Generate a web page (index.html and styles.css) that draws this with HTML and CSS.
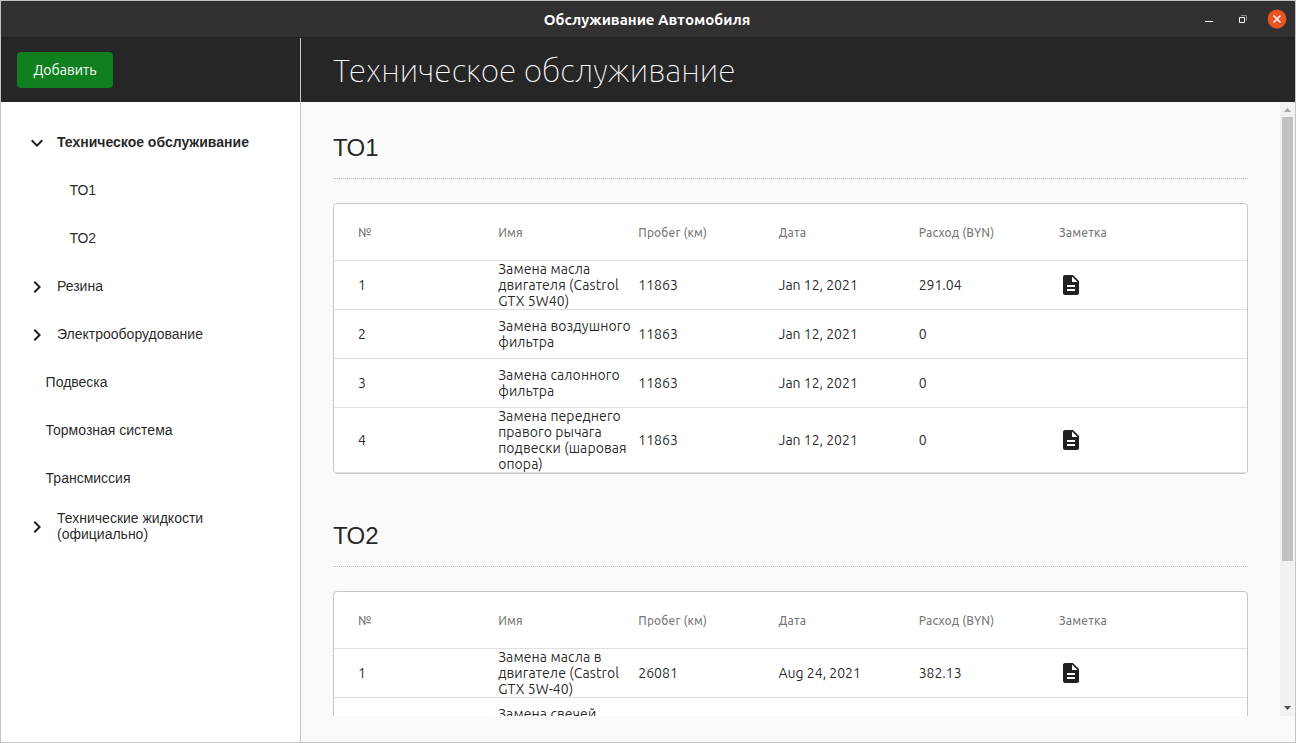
FILE: index.html
```html
<!DOCTYPE html>
<html lang="ru">
<head>
<meta charset="utf-8">
<title>Обслуживание Автомобиля</title>
<link rel="stylesheet" href="styles.css">
</head>
<body>
<svg class="defs" width="0" height="0" aria-hidden="true">
  <symbol id="chevron" viewBox="0 0 24 24"><path d="M8.59 16.59 13.17 12 8.59 7.41 10 6l6 6-6 6z"/></symbol>
  <symbol id="note" viewBox="0 0 24 24"><path d="M14 2H6c-1.1 0-2 .9-2 2v16c0 1.1.9 2 2 2h12c1.1 0 2-.9 2-2V8zm2 16H8v-2h8zm0-4H8v-2h8zm-3-5V3.5L18.500 9z"/></symbol>
</svg>
<div class="window">
  <header class="titlebar">
    <span class="window-title">Обслуживание Автомобиля</span>
    <div class="controls">
      <svg class="ctl" width="10" height="10"><path d="M1 7.500h8" stroke="#fff"/></svg>
      <svg class="ctl" width="10" height="10" fill="none"><path d="M3 1.500h5.500V7" stroke="#8c8b8b"/><path d="M1.500 3.500h5v5h-5z" stroke="#fff"/></svg>
      <svg class="close" width="20" height="20"><circle cx="10" cy="10" r="9.400" fill="#e95420"/><path d="m6.500 6.500 7 7m0-7-7 7" stroke="#fff" stroke-width="1.500"/></svg>
    </div>
  </header>
  <div class="body">
    <aside class="sidebar">
      <div class="toolbar"><button class="add">Добавить</button></div>
      <nav class="tree">
        <div class="node active"><svg class="arrow open"><use href="#chevron"/></svg><span>Техническое обслуживание</span></div>
        <div class="node child">ТО1</div>
        <div class="node child">ТО2</div>
        <div class="node"><svg class="arrow"><use href="#chevron"/></svg><span>Резина</span></div>
        <div class="node"><svg class="arrow"><use href="#chevron"/></svg><span>Электрооборудование</span></div>
        <div class="node leaf">Подвеска</div>
        <div class="node leaf">Тормозная система</div>
        <div class="node leaf">Трансмиссия</div>
        <div class="node"><svg class="arrow"><use href="#chevron"/></svg><span>Технические жидкости (официально)</span></div>
      </nav>
    </aside>
    <main class="main">
      <div class="page-head"><h1>Техническое обслуживание</h1></div>
      <div class="viewport">
        <div class="content">
          <section>
            <h2>ТО1</h2>
            <div class="table">
              <div class="row head"><span>№</span><span>Имя</span><span>Пробег (км)</span><span>Дата</span><span>Расход (BYN)</span><span>Заметка</span></div>
              <div class="row"><span>1</span><span class="name">Замена масла<br>двигателя (Castrol<br>GTX 5W40)</span><span>11863</span><span>Jan 12, 2021</span><span>291.04</span><svg class="note"><use href="#note"/></svg></div>
              <div class="row"><span>2</span><span class="name">Замена воздушного<br>фильтра</span><span>11863</span><span>Jan 12, 2021</span><span>0</span></div>
              <div class="row"><span>3</span><span class="name">Замена салонного<br>фильтра</span><span>11863</span><span>Jan 12, 2021</span><span>0</span></div>
              <div class="row"><span>4</span><span class="name">Замена переднего<br>правого рычага<br>подвески (шаровая<br>опора)</span><span>11863</span><span>Jan 12, 2021</span><span>0</span><svg class="note"><use href="#note"/></svg></div>
            </div>
          </section>
          <section>
            <h2>ТО2</h2>
            <div class="table">
              <div class="row head"><span>№</span><span>Имя</span><span>Пробег (км)</span><span>Дата</span><span>Расход (BYN)</span><span>Заметка</span></div>
              <div class="row"><span>1</span><span class="name">Замена масла в<br>двигателе (Castrol<br>GTX 5W-40)</span><span>26081</span><span>Aug 24, 2021</span><span>382.13</span><svg class="note"><use href="#note"/></svg></div>
              <div class="row tall"><span></span><span class="name">Замена свечей</span></div>
            </div>
          </section>
        </div>
        <div class="scrollbar">
          <svg class="up" width="15" height="15"><path d="M4 10h7L7.500 6z" fill="#a3a3a3"/></svg>
          <div class="thumb"></div>
          <svg class="down" width="15" height="15"><path d="M4 5h7L7.500 9z" fill="#505050"/></svg>
        </div>
      </div>
    </main>
  </div>
</div>
</body>
</html>
```
FILE: styles.css
```css
* { box-sizing: border-box; }
body { margin: 0; font: 14px/16px "Ubuntu", "Noto Sans", sans-serif; color: rgba(0, 0, 0, .87); }
.defs { display: block; }
.window { width: 1296px; height: 743px; border: 1px solid #c4c4c4; display: flex; flex-direction: column; overflow: hidden; background: #fafafa; }
.titlebar { height: 37px; flex: none; background: #323030; border-bottom: 1px solid #1f1f1f; display: grid; grid-template-columns: 1fr auto 1fr; align-items: center; }
.window-title { grid-column: 2; color: #fff; font-weight: 700; font-size: 15px; padding: 1px 2px 0 0; white-space: nowrap; }
.controls { display: flex; justify-content: flex-end; align-items: center; padding-right: 8px; }
.ctl { margin-right: 24px; }
.ctl + .ctl { margin-right: 23px; }
.ctl + .close { margin-left: -4px; }
.body { flex: 1; display: flex; min-height: 0; }
.sidebar { width: 300px; flex: none; background: #fff; border-right: 1px solid #c6c6c6; }
.toolbar { height: 64px; background: #262626; padding: 14px 16px; }
.add { width: 96px; height: 36px; border: 0; border-radius: 4px; background: #0f7f1f; color: #fff; font: 450 14px/36px "Ubuntu", "Noto Sans", sans-serif; padding: 0; letter-spacing: .05px; }
.tree { padding-top: 16px; font-family: "Liberation Sans", sans-serif; }
.node { min-height: 48px; display: flex; align-items: center; padding: 0 40px 0 24px; }
.node span { margin-left: 8px; }
.active { font-weight: 700; white-space: nowrap; padding-right: 0; }
.child { padding-left: 68.500px; }
.leaf { padding-left: 44.600px; }
.arrow { width: 24px; height: 24px; flex: none; fill: #212121; padding: 0; margin-top: 2px; }
.arrow.open { transform: rotate(90deg); }
.main { flex: 1; min-width: 0; display: flex; flex-direction: column; }
.page-head { height: 64px; flex: none; background: #262626; padding-left: 32px; }
h1 { margin: 0; color: #fff; font: 100 32px/64px "Ubuntu", "Noto Sans", sans-serif; letter-spacing: .03px; white-space: nowrap; }
.viewport { height: 614px; display: flex; overflow: hidden; }
.content { flex: 1; padding: 24px 32px 0; }
section { margin-bottom: 40px; }
h2 { margin: 0 0 24px; height: 53px; font: 400 24px/43px "Liberation Sans", sans-serif; border-bottom: 1px dotted #bdbdbd; }
.table { background: #fff; border: 1px solid #c6c6c6; border-radius: 4px; }
.row { display: grid; grid-template-columns: repeat(6, 1fr); align-items: center; min-height: 49px; padding: 0 48px 0 24px; border-bottom: 1px solid #e0e0e0; white-space: nowrap; }
.name { letter-spacing: .1px; }
.head { height: 57px; padding-top: 1px; font-size: 12px; font-weight: 500; letter-spacing: .12px; color: rgba(0, 0, 0, .54); }
.tall { height: 65px; padding-bottom: 32px; }
.note { width: 24px; height: 24px; fill: #212121; }
.scrollbar { width: 15px; background: #f1f1f1; display: flex; flex-direction: column; }
.scrollbar svg { flex: none; }
.thumb { height: 444px; width: 11px; margin-left: 2px; background: #c1c1c1; }
.down { margin-top: auto; }
```
